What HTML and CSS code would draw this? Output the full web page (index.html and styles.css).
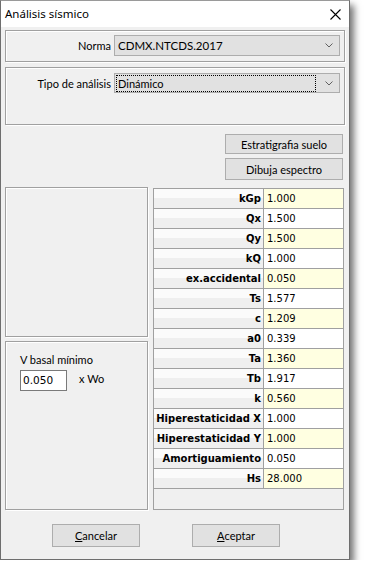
FILE: index.html
```html
<!DOCTYPE html>
<html>
<head lang="es">
    <meta charset="UTF-8">
    <title>Análisis sísmico</title>
    <link rel="stylesheet" href="styles.css">
</head>
<body>
<div class="window">
    <div class="titlebar">
        <span class="title">Análisis sísmico</span>
        <svg class="close" width="11" height="11" viewBox="0 0 11 11">
            <path d="M0.5 0.5 L10.5 10.5 M10.5 0.5 L0.5 10.5" stroke="#000" stroke-width="1.1" fill="none"/>
        </svg>
    </div>
    <div class="content">
        <div class="group group-norma">
            <span class="field-label">Norma</span>
            <div class="combo combo-norma">
                <span class="combo-text">CDMX.NTCDS.2017</span>
                <svg class="chevron" width="8" height="5" viewBox="0 0 8 5">
                    <path d="M0.5 0.5 L4 4 L7.5 0.5" stroke="#606060" fill="none"/>
                </svg>
            </div>
        </div>
        <div class="group group-tipo">
            <span class="field-label">Tipo de análisis</span>
            <div class="combo combo-tipo">
                <span class="combo-text focus">Dinámico</span>
                <svg class="chevron" width="8" height="5" viewBox="0 0 8 5">
                    <path d="M0.5 0.5 L4 4 L7.5 0.5" stroke="#606060" fill="none"/>
                </svg>
            </div>
        </div>
        <div class="actions">
            <div class="btn btn-side">Estratigrafia suelo</div>
            <div class="btn btn-side btn-tall">Dibuja espectro</div>
        </div>
        <div class="main">
            <div class="side">
                <div class="panel panel-top"></div>
                <div class="panel panel-basal">
                    <div class="basal-label">V basal mínimo</div>
                    <div class="basal-row">
                        <div class="input">0.050</div>
                        <span class="unit">x Wo</span>
                    </div>
                </div>
            </div>
            <div class="grid">
                <div class="row"><div class="key">kGp</div><div class="val alt">1.000</div></div>
                <div class="row"><div class="key">Qx</div><div class="val">1.500</div></div>
                <div class="row"><div class="key">Qy</div><div class="val alt">1.500</div></div>
                <div class="row"><div class="key">kQ</div><div class="val">1.000</div></div>
                <div class="row"><div class="key">ex.accidental</div><div class="val alt">0.050</div></div>
                <div class="row"><div class="key">Ts</div><div class="val">1.577</div></div>
                <div class="row"><div class="key">c</div><div class="val alt">1.209</div></div>
                <div class="row"><div class="key">a0</div><div class="val">0.339</div></div>
                <div class="row"><div class="key">Ta</div><div class="val alt">1.360</div></div>
                <div class="row"><div class="key">Tb</div><div class="val">1.917</div></div>
                <div class="row"><div class="key">k</div><div class="val alt">0.560</div></div>
                <div class="row"><div class="key">Hiperestaticidad X</div><div class="val">1.000</div></div>
                <div class="row"><div class="key">Hiperestaticidad Y</div><div class="val alt">1.000</div></div>
                <div class="row"><div class="key">Amortiguamiento</div><div class="val">0.050</div></div>
                <div class="row"><div class="key">Hs</div><div class="val alt">28.000</div></div>
            </div>
        </div>
        <div class="footer">
            <div class="btn btn-foot"><u>C</u>ancelar</div>
            <div class="btn btn-foot"><u>A</u>ceptar</div>
        </div>
    </div>
</div>
</body>
</html>
```
FILE: styles.css
```css
* {
    margin: 0;
    padding: 0;
    box-sizing: border-box;
}

body {
    background-color: #fff;
    font-family: Lato, "Noto Sans", sans-serif;
    font-size: 11px;
    color: #000;
}

.window {
    width: 350px;
    height: 560px;
    border: 1px solid #6e6e6e;
    border-top-color: #9a9a9a;
    background-color: #f0f0f0;
    box-shadow: 4px 5px 7px rgba(0, 0, 0, 0.55);
    display: flex;
    flex-direction: column;
}

.titlebar {
    height: 26px;
    background-color: #fff;
    display: flex;
    align-items: center;
    justify-content: space-between;
    padding: 0 8px 0 4px;
}

.title {
    font-family: "Noto Sans", sans-serif;
    font-size: 11.5px;
    line-height: 14px;
}

.close {
    display: block;
    margin-top: 1px;
}

.content {
    padding: 3px 3px 0 4px;
    display: flex;
    flex-direction: column;
}

.group {
    width: 340px;
    border: 1px solid #a0a0a0;
    box-shadow: inset 1px 1px 0 #fff, 1px 1px 0 #fff;
    display: flex;
    align-items: flex-start;
}

.group-norma {
    height: 32px;
    padding-top: 4px;
}

.group-tipo {
    height: 58px;
    margin-top: 5px;
    padding-top: 5px;
}

.field-label {
    width: 108px;
    text-align: right;
    padding-right: 3px;
    line-height: 21px;
}

.combo {
    width: 226px;
    background-color: #e1e1e1;
    border: 1px solid #adadad;
    display: flex;
    align-items: center;
    padding: 0 6px 0 3px;
}

.combo-norma {
    height: 21px;
    font-size: 11.5px;
}

.combo-tipo {
    height: 20px;
    padding-left: 2px;
}

.combo-text {
    flex: 1;
    line-height: 15px;
}

.focus {
    outline: 1px dotted #000;
    padding-left: 1px;
    margin-right: 10px;
}

.chevron {
    display: block;
}

.actions {
    margin-top: 9px;
    display: flex;
    flex-direction: column;
    align-items: flex-end;
    padding-right: 2px;
    width: 340px;
    gap: 4px;
}

.btn {
    background-color: #e1e1e1;
    border: 1px solid #adadad;
    display: flex;
    align-items: center;
    justify-content: center;
}

.btn-side {
    width: 118px;
    height: 20px;
}

.btn-tall {
    height: 22px;
}

.main {
    margin-top: 7px;
    display: flex;
    gap: 5px;
    height: 323px;
}

.side {
    width: 143px;
    display: flex;
    flex-direction: column;
    gap: 4px;
}

.panel {
    border: 1px solid #a0a0a0;
    box-shadow: inset 1px 1px 0 #fff, 1px 1px 0 #fff;
}

.panel-top {
    height: 150px;
}

.panel-basal {
    flex: 1;
    padding: 10px 0 0 14px;
}

.basal-label {
    line-height: 16px;
}

.basal-row {
    display: flex;
    align-items: center;
    margin-top: 2px;
}

.input {
    width: 47px;
    height: 21px;
    background-color: #fff;
    border: 1px solid #7a7a7a;
    font-family: "DejaVu Sans", sans-serif;
    font-size: 10.5px;
    line-height: 19px;
    padding-left: 2px;
}

.unit {
    margin-left: 12px;
    margin-top: -5px;
}

.grid {
    width: 191px;
    height: 322px;
    margin-top: 1px;
    border: 1px solid #a0a0a0;
    background-color: #f0f0f0;
}

.row {
    display: flex;
    height: 20px;
    border-bottom: 1px solid #a0a0a0;
}

.key {
    width: 110px;
    border-right: 1px solid #a0a0a0;
    background: linear-gradient(to bottom, #fbfbfb 0, #fbfbfb 45%, #efefef 45%, #efefef 100%);
    text-align: right;
    padding-right: 2px;
    font-family: "DejaVu Sans", sans-serif;
    font-weight: bold;
    font-size: 10px;
    line-height: 19px;
}

.val {
    flex: 1;
    background-color: #fff;
    padding-left: 3px;
    font-family: "DejaVu Sans", sans-serif;
    font-size: 10px;
    line-height: 19px;
}

.alt {
    background-color: #ffffe1;
}

.footer {
    margin-top: 14px;
    padding-left: 47px;
    display: flex;
    gap: 52px;
}

.btn-foot {
    width: 88px;
    height: 23px;
}
```
